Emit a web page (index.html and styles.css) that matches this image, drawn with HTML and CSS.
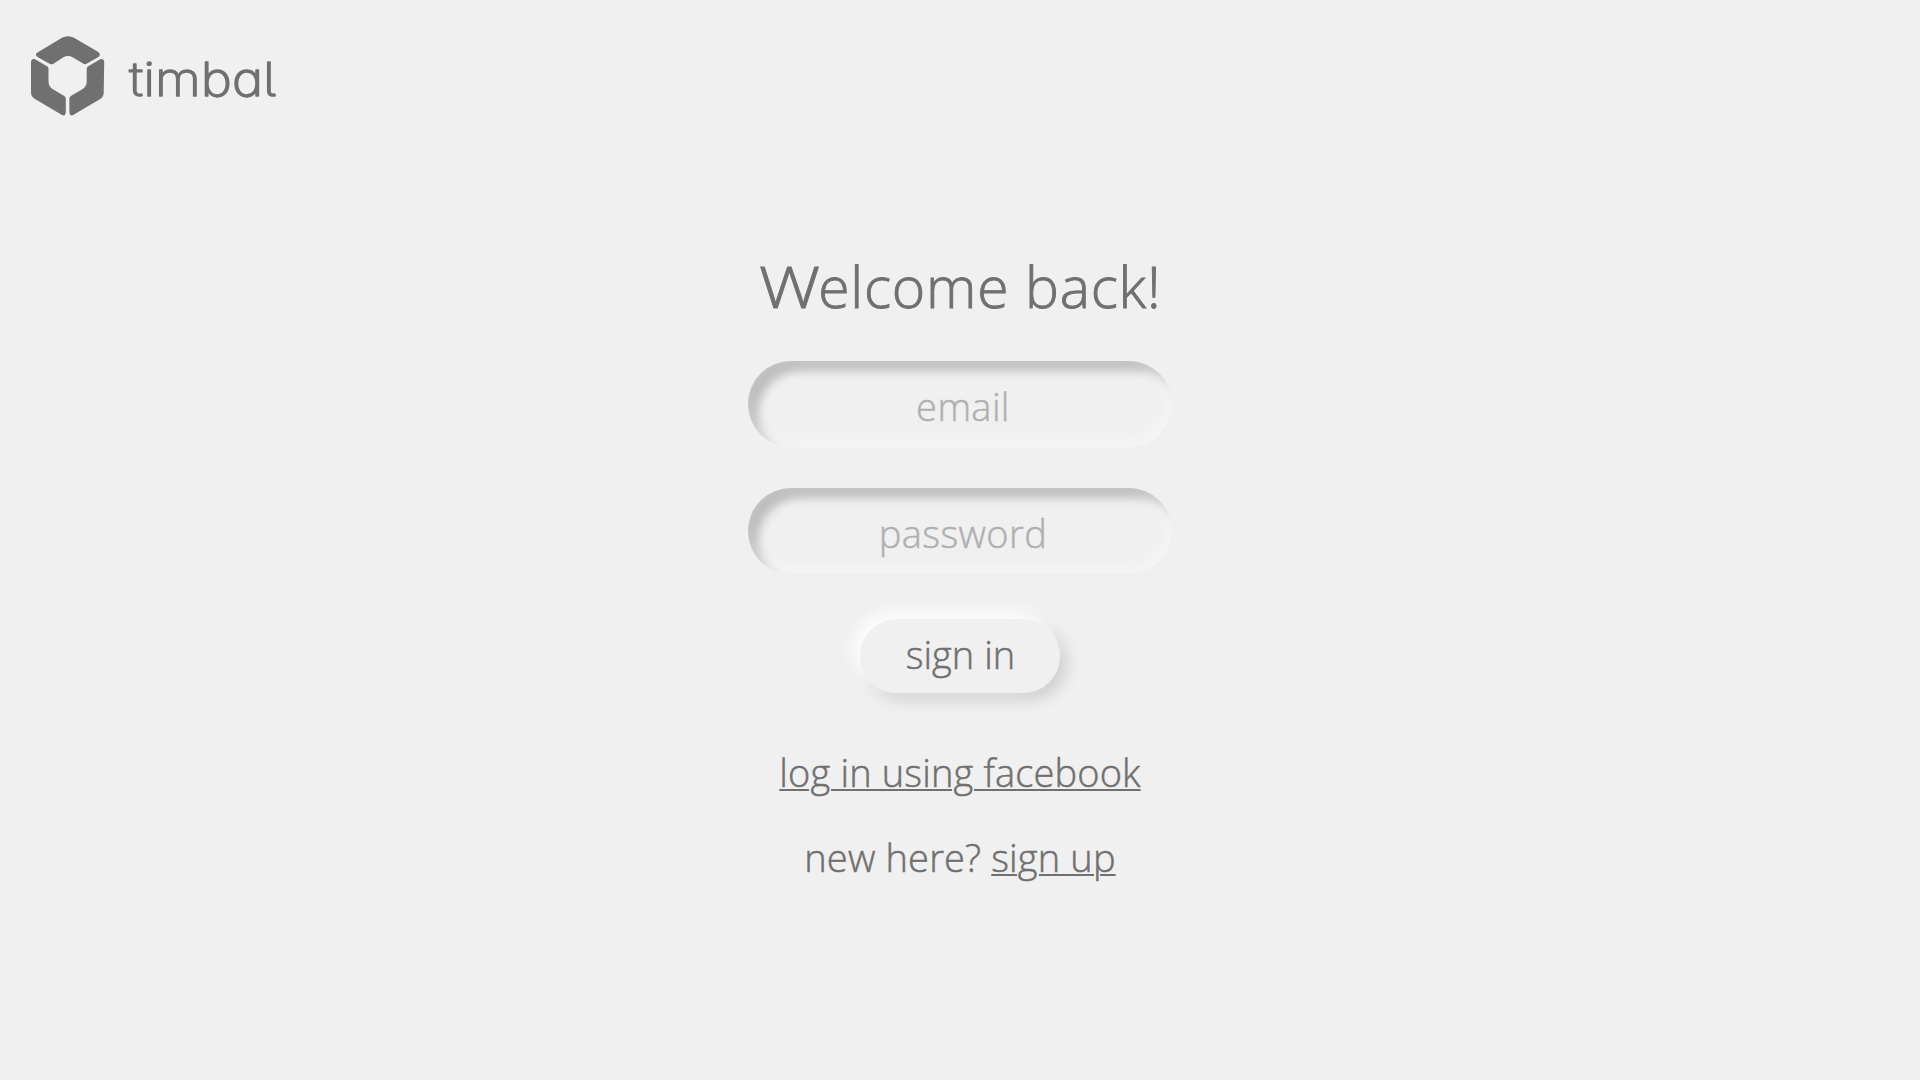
FILE: index.html
```html
<!DOCTYPE html>
<html lang="en">
<head>
<meta charset="utf-8">
<title>timbal</title>
<link rel="stylesheet" href="styles.css">
</head>
<body>
<header class="brand">
  <svg class="brand-mark" width="74" height="80" viewBox="0 0 74 80" aria-hidden="true">
    <path d="M6.500 16.500 L31 1.800 Q37 -1.500 43 1.800 L66.500 15.600 Q71 18.500 67 21.300 L55.500 27.800 Q54 28.600 52.500 27.700 L42 21.500 Q37 18.600 32 21.500 L22 27.900 Q20.500 28.800 19 27.900 L7 21.300 Q3 18.800 6.500 16.500Z"/>
    <path d="M0 26 Q0.500 21.800 4 23.300 L16 30.200 Q17.500 31 17.500 32.700 L17.500 45 Q17.500 50.500 21.500 53 L33.300 60 Q34.800 61 34.800 62.500 L34.800 76.500 Q34.300 80.500 31 79 L4 63 Q0 60.500 0 56.500Z"/>
    <path d="M73.200 26 Q72.700 21.800 69.200 23.300 L57.200 30.200 Q55.700 31 55.700 32.700 L55.700 45 Q55.700 50.500 51.700 53 L39.900 60 Q38.400 61 38.400 62.500 L38.400 76.500 Q38.900 80.500 42.200 79 L69.200 63 Q72.700 60.500 72.700 56.500Z"/>
  </svg>
  <svg class="brand-name" width="160" height="60" viewBox="0 0 160 60">
    <text x="0" y="45" textLength="147" lengthAdjust="spacingAndGlyphs">timbal</text>
  </svg>
</header>
<main class="login">
  <h1 class="title"><span class="title-initial">W</span>elcome back!</h1>
  <form class="form">
    <input class="field" type="email" placeholder="email" aria-label="email">
    <input class="field" type="password" placeholder="password" aria-label="password">
    <button class="submit" type="button"><span>sign in</span></button>
  </form>
  <p class="line"><a class="link" href="#">log in using facebook</a></p>
  <p class="line"><span>new here? <a class="link" href="#">sign up</a></span></p>
</main>
</body>
</html>
```
FILE: styles.css
```css
* { box-sizing: border-box; }
body {
  margin: 0;
  height: 1080px;
  background: #f0f0f0;
  color: #707070;
  font-family: "Open Sans", "Noto Sans", sans-serif;
  font-size: 38px;
  font-weight: 300;
  letter-spacing: .15px;
  -webkit-text-stroke: .5px currentColor;
  overflow: hidden;
}
.brand {
  display: flex;
  height: 152px;
  padding: 36px 0 0 31px;
  gap: 24px;
}
.brand-mark { fill: #707070; }
.brand-name { margin-top: 15px; overflow: visible; }
.brand-name text {
  font: 200 47px Inter, sans-serif;
  font-feature-settings: "cv11", "cv05";
  letter-spacing: 0;
  -webkit-text-stroke: 0;
  fill: #707070;
  stroke: #707070;
  stroke-width: 1.4px;
  stroke-linejoin: round;
}
.login {
  display: flex;
  flex-direction: column;
  align-items: center;
  padding-top: 101px;
}
.title {
  margin: 0 0 42px;
  font-size: 57px;
  font-weight: 300;
  letter-spacing: .8px;
  line-height: 66px;
  -webkit-text-stroke-width: .9px;
}
.title-initial {
  display: inline-block;
  margin-right: 8px;
  transform: scaleX(1.2);
  transform-origin: left;
}
.form {
  display: flex;
  flex-direction: column;
  align-items: center;
  margin-bottom: 54px;
}
.field {
  width: 424px;
  height: 86px;
  margin-bottom: 41px;
  padding: 3px 0 0 6px;
  border: 0;
  border-radius: 43px;
  background: #f0f0f0;
  box-shadow: inset -4px -4px 16px rgba(255, 255, 255, .4), inset 10px 10px 10px #bcbcbc;
  color: #707070;
  font: inherit;
  letter-spacing: .4px;
  text-align: center;
}
.field::placeholder { color: #b0b0b0; opacity: 1; }
.submit {
  width: 200px;
  height: 74px;
  margin-top: 4px;
  padding: 0 0 5px 1px;
  border: 0;
  border-radius: 37px;
  background: #f0f0f0;
  box-shadow: -6px -6px 16px #fff, 6px 6px 16px rgba(0, 0, 0, .16);
  color: inherit;
  font: inherit;
}
.line {
  margin: 0 0 35px;
  line-height: 50px;
}
.link {
  color: inherit;
  text-decoration: underline;
  text-decoration-thickness: 2px;
  text-underline-offset: 2px;
}
```
